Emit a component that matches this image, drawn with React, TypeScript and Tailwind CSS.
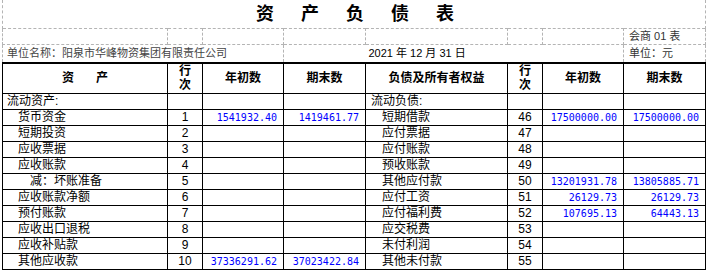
import React from 'react';

type Row = {
  left: string;
  lIndent: number;
  lNo: string;
  lBegin: string;
  lEnd: string;
  right: string;
  rIndent: number;
  rNo: string;
  rBegin: string;
  rEnd: string;
};

const rows: Row[] = [
  { left: '流动资产:', lIndent: 0, lNo: '', lBegin: '', lEnd: '', right: '流动负债:', rIndent: 0, rNo: '', rBegin: '', rEnd: '' },
  { left: '货币资金', lIndent: 1, lNo: '1', lBegin: '1541932.40', lEnd: '1419461.77', right: '短期借款', rIndent: 1, rNo: '46', rBegin: '17500000.00', rEnd: '17500000.00' },
  { left: '短期投资', lIndent: 1, lNo: '2', lBegin: '', lEnd: '', right: '应付票据', rIndent: 1, rNo: '47', rBegin: '', rEnd: '' },
  { left: '应收票据', lIndent: 1, lNo: '3', lBegin: '', lEnd: '', right: '应付账款', rIndent: 1, rNo: '48', rBegin: '', rEnd: '' },
  { left: '应收账款', lIndent: 1, lNo: '4', lBegin: '', lEnd: '', right: '预收账款', rIndent: 1, rNo: '49', rBegin: '', rEnd: '' },
  { left: '减：坏账准备', lIndent: 2, lNo: '5', lBegin: '', lEnd: '', right: '其他应付款', rIndent: 1, rNo: '50', rBegin: '13201931.78', rEnd: '13805885.71' },
  { left: '应收账款净额', lIndent: 1, lNo: '6', lBegin: '', lEnd: '', right: '应付工资', rIndent: 1, rNo: '51', rBegin: '26129.73', rEnd: '26129.73' },
  { left: '预付账款', lIndent: 1, lNo: '7', lBegin: '', lEnd: '', right: '应付福利费', rIndent: 1, rNo: '52', rBegin: '107695.13', rEnd: '64443.13' },
  { left: '应收出口退税', lIndent: 1, lNo: '8', lBegin: '', lEnd: '', right: '应交税费', rIndent: 1, rNo: '53', rBegin: '', rEnd: '' },
  { left: '应收补贴款', lIndent: 1, lNo: '9', lBegin: '', lEnd: '', right: '未付利润', rIndent: 1, rNo: '54', rBegin: '', rEnd: '' },
  { left: '其他应收款', lIndent: 1, lNo: '10', lBegin: '37336291.62', lEnd: '37023422.84', right: '其他未付款', rIndent: 1, rNo: '55', rBegin: '', rEnd: '' },
];

const leftPad = ['pl-[4px]', 'pl-[15px]', 'pl-[27px]'];
const rightPad = ['pl-[5px]', 'pl-[16px]', 'pl-[28px]'];

const cell = 'border border-black h-[16px] p-0 leading-[15px] whitespace-nowrap';
const dash = 'border-dashed border-[#b4b4b4]';
const num = "text-right pr-[6px] text-[#0000ff] font-['DejaVu_Sans_Mono',monospace] text-[10px]";

export default function App() {
  return (
    <div className="w-[707px] h-[273px] bg-white overflow-hidden font-['Liberation_Sans','Noto_Sans_CJK_SC',sans-serif] text-[12px] text-black">
      <table className="ml-[2px] w-[703px] table-fixed border-collapse">
        <colgroup>
          <col className="w-[165px]" />
          <col className="w-[35px]" />
          <col className="w-[81px]" />
          <col className="w-[82px]" />
          <col className="w-[142px]" />
          <col className="w-[35px]" />
          <col className="w-[81px]" />
          <col className="w-[82px]" />
        </colgroup>
        <tbody>
          {/* title */}
          <tr>
            <td colSpan={8} className={`h-[28px] p-0 border-l border-r ${dash}`}>
              <div className="flex justify-center gap-[27px] text-[18px] font-bold leading-[28px] pl-[2px]">
                <span>资</span>
                <span>产</span>
                <span>负</span>
                <span>债</span>
                <span>表</span>
              </div>
            </td>
          </tr>

          {/* form code row */}
          <tr>
            {[0, 1, 2, 3, 4, 5, 6].map((i) => (
              <td key={i} className={`h-[16px] p-0 border ${dash}`} />
            ))}
            <td className={`h-[16px] p-0 pl-[5px] border ${dash} text-[11px] text-[#333] leading-[15px]`}>会商 01 表</td>
          </tr>

          {/* unit / date row */}
          <tr>
            <td colSpan={3} className={`h-[18px] p-0 pl-[4px] border-l border-b ${dash} text-[11px] text-[#444] leading-[17px] whitespace-nowrap`}>
              单位名称：阳泉市华峰物资集团有限责任公司
            </td>
            <td className={`h-[18px] p-0 border-l border-b ${dash}`} />
            <td colSpan={3} className={`h-[18px] p-0 pl-[3px] border-b ${dash} text-[11px] leading-[17px] whitespace-nowrap`}>
              2021 年 12 月 31 日
            </td>
            <td className={`h-[18px] p-0 pl-[5px] border-l border-r border-b ${dash} text-[11px] text-[#333] leading-[17px]`}>
              单位：元
            </td>
          </tr>

          {/* header */}
          <tr className="font-bold text-[12px]">
            <th className="border border-black border-t-2 h-[30px] p-0 font-bold">
              <span className="tracking-[22px] pl-[22px]">资产</span>
            </th>
            <th className="border border-black border-t-2 h-[30px] p-0 font-bold leading-[14px]">
              行<br />次
            </th>
            <th className="border border-black border-t-2 h-[30px] p-0 font-bold">年初数</th>
            <th className="border border-black border-t-2 h-[30px] p-0 font-bold">期末数</th>
            <th className="border border-black border-t-2 h-[30px] p-0 font-bold">负债及所有者权益</th>
            <th className="border border-black border-t-2 h-[30px] p-0 font-bold leading-[14px]">
              行<br />次
            </th>
            <th className="border border-black border-t-2 h-[30px] p-0 font-bold">年初数</th>
            <th className="border border-black border-t-2 h-[30px] p-0 font-bold">期末数</th>
          </tr>

          {rows.map((r, i) => (
            <tr key={i}>
              <td className={`${cell} ${leftPad[r.lIndent]}`}>{r.left}</td>
              <td className={`${cell} text-center`}>{r.lNo}</td>
              <td className={`${cell} ${num}`}>{r.lBegin}</td>
              <td className={`${cell} ${num}`}>{r.lEnd}</td>
              <td className={`${cell} ${rightPad[r.rIndent]}`}>{r.right}</td>
              <td className={`${cell} text-center`}>{r.rNo}</td>
              <td className={`${cell} ${num}`}>{r.rBegin}</td>
              <td className={`${cell} ${num}`}>{r.rEnd}</td>
            </tr>
          ))}
        </tbody>
      </table>
    </div>
  );
}
